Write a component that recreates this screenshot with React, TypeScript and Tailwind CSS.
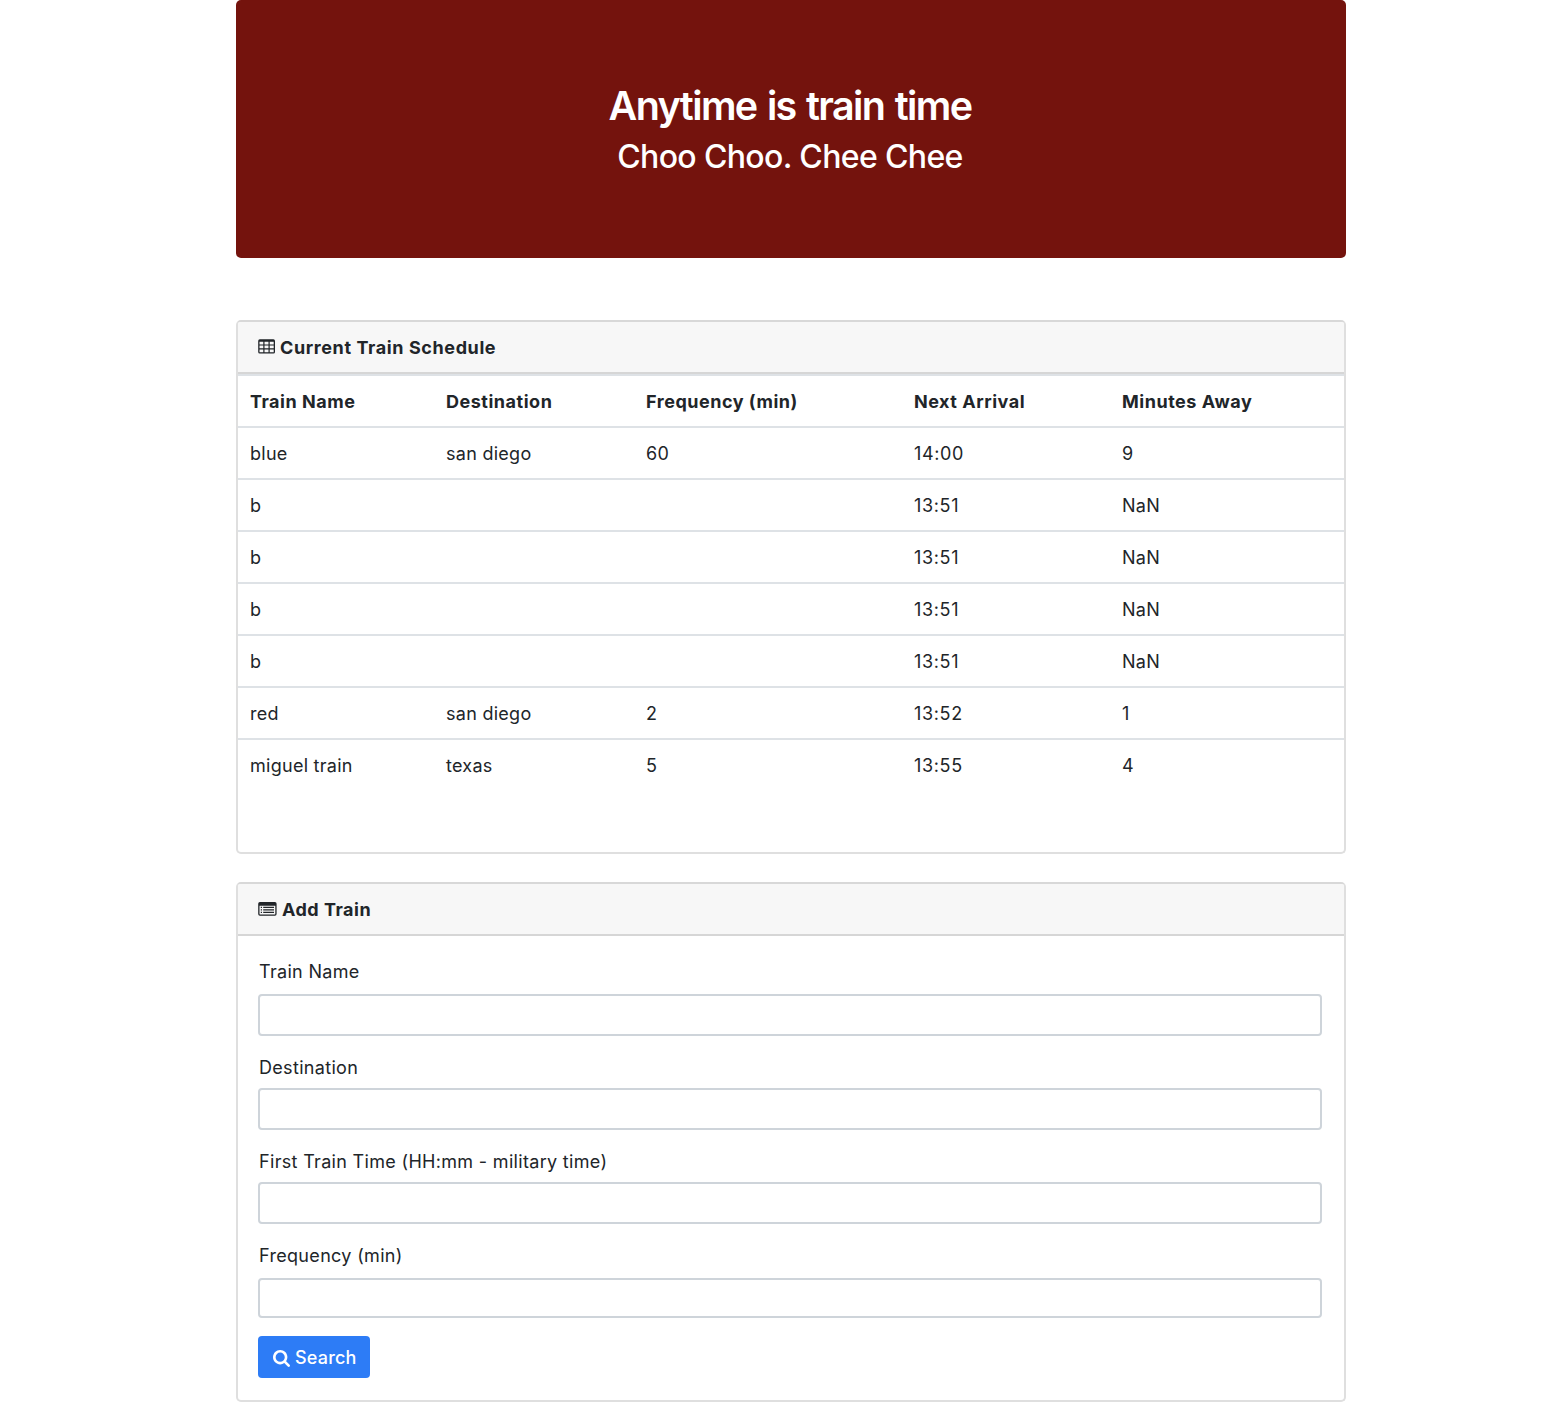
const columns = ["Train Name", "Destination", "Frequency (min)", "Next Arrival", "Minutes Away"];
const rows = [
  ["blue", "san diego", "60", "14:00", "9"],
  ["b", "", "", "13:51", "NaN"],
  ["b", "", "", "13:51", "NaN"],
  ["b", "", "", "13:51", "NaN"],
  ["b", "", "", "13:51", "NaN"],
  ["red", "san diego", "2", "13:52", "1"],
  ["miguel train", "texas", "5", "13:55", "4"],
];
const fields = [
  { label: "Train Name", labelBox: "h-[58px] pt-[22px]", inputBox: "h-[42px]" },
  { label: "Destination", labelBox: "h-[52px] pt-[18px]", inputBox: "h-[42px]" },
  { label: "First Train Time (HH:mm - military time)", labelBox: "h-[52px] pt-[18px]", inputBox: "h-[42px]" },
  { label: "Frequency (min)", labelBox: "h-[54px] pt-[18px]", inputBox: "h-[40px]" },
];

function TableIcon() {
  return (
    <svg className="mr-[5px] mb-px h-[15px] w-[17px] shrink-0" viewBox="0 0 17 15" fill="currentColor">
      <path fillRule="evenodd" d="M1.8 .3h13.6Q17 .3 17 1.9v11Q17 14.5 15.4 14.5H1.8Q.2 14.5 .2 12.9V1.9Q.2 .3 1.8 .3ZM1.5 2.8h3.8v2.7H1.5ZM6.5 2.8h4v2.7h-4ZM11.7 2.8h4v2.7h-4ZM1.5 6.6h3.8v2.7H1.5ZM6.5 6.6h4v2.7h-4ZM11.7 6.6h4v2.7h-4ZM1.5 10.4h3.8v2.8H1.5ZM6.5 10.4h4v2.8h-4ZM11.7 10.4h4v2.8h-4Z" />
    </svg>
  );
}

function ListIcon() {
  return (
    <svg className="mr-[5px] h-[14px] w-[19px] shrink-0" viewBox="0 0 19 14" fill="currentColor">
      <path fillRule="evenodd" d="M1.9 0h15Q18.6 0 18.6 1.7v10.4Q18.6 13.8 16.9 13.8h-15Q.2 13.8 .2 12.1V1.7Q.2 0 1.9 0ZM1.5 3.7v8.4q0 .4.4.4h15q.4 0 .4-.4V3.7Z" />
      <path d="M2.8 4.7h1.2v1.2H2.8ZM2.8 7.2h1.2v1.2H2.8ZM2.8 9.8h1.2v1.2H2.8ZM5.2 4.7H16v1.2H5.2ZM5.2 7.2H16v1.2H5.2ZM5.2 9.8H16v1.2H5.2Z" />
    </svg>
  );
}

function SearchIcon() {
  return (
    <svg className="mt-[2px] mr-[5px] size-[17px] shrink-0" viewBox="64 128 1664 1664" fill="currentColor">
      <path d="M1216 832q0-185-131.5-316.5t-316.5-131.5-316.5 131.5-131.5 316.5 131.5 316.5 316.5 131.5 316.5-131.5 131.5-316.5zm512 832q0 52-38 90t-90 38q-54 0-90-38l-343-342q-179 124-399 124-143 0-273.5-55.5t-225-150-150-225-55.5-273.5 55.5-273.5 150-225 225-150 273.5-55.5 273.5 55.5 225 150 150 225 55.5 273.5q0 220-124 399l343 343q37 37 37 90z" />
    </svg>
  );
}

export default function App() {
  return (
    <div className="h-[1420px] w-[1556px] bg-white pl-[236px] font-['Inter',sans-serif] text-[18px] tracking-[0.32px] text-[#212529]">
      <div className="w-[1110px]">
        <header className="h-[258px] rounded-[5px] bg-[#74130d] pt-[82px] pr-[2px] text-center text-white">
          <h1 className="text-[39.5px] leading-[48px] font-[560] tracking-[-1.62px] [word-spacing:2px]">Anytime is train time</h1>
          <h2 className="mt-[7px] text-[32px] leading-[40px] font-[540] tracking-[-0.64px]">Choo Choo. Chee Chee</h2>
        </header>
        <section className="mt-[62px] h-[534px] rounded-[5px] border-2 border-[#dfdfdf] border-t-[#d8d8d8]">
          <h3 className="flex h-[52px] items-center rounded-t-[3px] border-b-2 border-[#d6d6d6] bg-[#f7f7f7] pl-5 font-bold tracking-[0.6px]">
            <TableIcon />
            Current Train Schedule
          </h3>
          <table className="w-full table-fixed border-separate border-spacing-0">
            <colgroup>
              <col className="w-[196px]" />
              <col className="w-[200px]" />
              <col className="w-[268px]" />
              <col className="w-[208px]" />
              <col />
            </colgroup>
            <thead>
              <tr>
                {columns.map((c) => (
                  <th key={c} className="h-[52px] border-t-2 border-[#dee2e6] p-0 pl-3 text-left font-bold tracking-[0.52px]">{c}</th>
                ))}
              </tr>
            </thead>
            <tbody>
              {rows.map((r, i) => (
                <tr key={i}>
                  {r.map((v, j) => (
                    <td key={j} className={`h-[52px] border-t-2 border-[#dee2e6] p-0 pl-3 ${j === 3 ? "tracking-[0.65px]" : "tracking-[0.27px]"}`}>{v}</td>
                  ))}
                </tr>
              ))}
            </tbody>
          </table>
        </section>
        <section className="mt-7 h-[520px] rounded-[5px] border-2 border-[#dfdfdf] border-t-[#d8d8d8]">
          <h3 className="flex h-[52px] items-center rounded-t-[3px] border-b-2 border-[#d6d6d6] bg-[#f7f7f7] pl-5 font-bold tracking-[0.5px]">
            <ListIcon />
            Add Train
          </h3>
          <form className="w-[1084px] pl-5">
            {fields.map((f) => (
              <label key={f.label} className="block">
                <span className={`block pl-px leading-[28px] ${f.labelBox}`}>{f.label}</span>
                <input className={`block w-full rounded-[4px] border-2 border-[#ced4da] bg-white px-3 outline-none ${f.inputBox}`} />
              </label>
            ))}
            <button type="button" className="mt-[18px] flex h-[42px] w-[112px] items-center rounded-[4px] bg-[#2d7cf6] pl-[15px] font-[450] tracking-[0.2px] text-white">
              <SearchIcon />
              Search
            </button>
          </form>
        </section>
      </div>
    </div>
  );
}
